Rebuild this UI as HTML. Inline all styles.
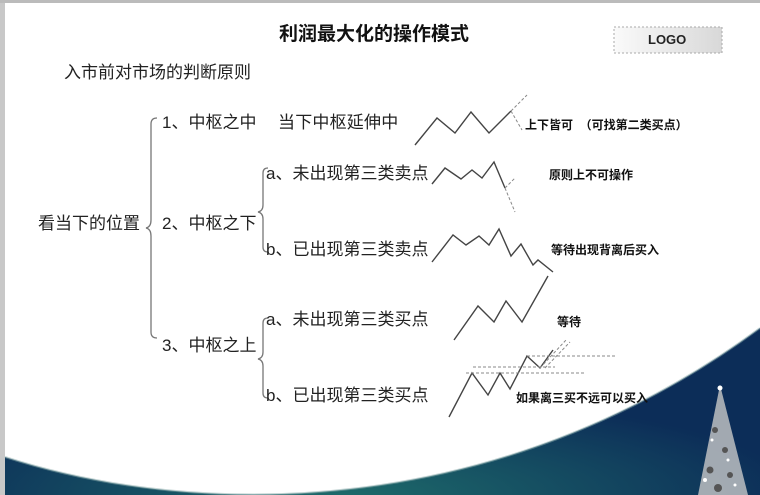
<!DOCTYPE html>
<html><head><meta charset="utf-8"><style>
body{margin:0;width:760px;height:495px;overflow:hidden;background:#fff;font-family:"Liberation Sans","Noto Sans CJK SC",sans-serif;color:#222;position:relative}
.t{position:absolute;white-space:nowrap;font-size:17px;line-height:1}
.b{font-weight:bold;font-size:12px;color:#111}
</style></head><body>
<svg width="760" height="495" style="position:absolute;left:0;top:0">
<defs>
<radialGradient id="g" cx="0.45" cy="1" r="0.6"><stop offset="0" stop-color="#1d6a6a"/><stop offset="1" stop-color="#0c2d58"/></radialGradient>
<linearGradient id="lg" x1="0" x2="1"><stop offset="0" stop-color="#fafafa"/><stop offset="1" stop-color="#d8d8d8"/></linearGradient>
</defs>
<rect x="0" y="0" width="5" height="495" fill="#c8c8c8"/>
<rect x="0" y="0" width="760" height="3" fill="#bbb"/>
<path d="M5,457 C200,520 500,520 760,328 L760,495 L5,495 Z" fill="url(#g)"/>
<path d="M5,457 C200,520 500,520 760,328" fill="none" stroke="#8aa" stroke-width="2" opacity=".5"/>
<g fill="#c8c8c8" opacity=".8">
<polygon points="720,385 698,495 748,495"/>
</g>
<g fill="#fff"><circle cx="720" cy="388" r="2.5"/><circle cx="712" cy="440" r="1.5"/><circle cx="728" cy="460" r="1.5"/><circle cx="705" cy="480" r="2"/><circle cx="735" cy="485" r="1.5"/></g>
<g fill="#555"><circle cx="715" cy="430" r="3"/><circle cx="725" cy="450" r="3"/><circle cx="710" cy="470" r="3.5"/><circle cx="730" cy="475" r="3"/><circle cx="718" cy="488" r="4"/></g>
<rect x="614" y="27" width="108" height="26" fill="url(#lg)" stroke="#aaa" stroke-dasharray="2,2"/>
<g fill="none" stroke="#777" stroke-width="1.3">
<path d="M157,118 Q151,118 151,124 L151,220 Q151,227 146,228 Q151,229 151,236 L151,332 Q151,338 157,338"/>
<path d="M268,168 Q263,168 263,173 L263,205 Q263,211 258,212 Q263,213 263,219 L263,247 Q263,252 268,252"/>
<path d="M268,318 Q263,318 263,323 L263,352 Q263,358 258,359 Q263,360 263,366 L263,393 Q263,398 268,398"/>
</g>
<g fill="none" stroke="#444" stroke-width="1.4">
<polyline points="415,145 437,118 455,133 471,112 489,133 511,111"/>
<polyline points="432,184 445,168 461,179 472,170 482,178 494,162 505,188"/>
<polyline points="432,262 453,235 466,245 479,236 489,245 499,229 511,256 521,244 533,265 538,260 553,272"/>
<polyline points="454,340 478,306 494,322 506,301 522,322 548,276"/>
<polyline points="449,417 472,373 488,395 500,373 510,389 527,356 540,368 553,350"/>
</g>
<g fill="none" stroke="#888" stroke-width="1" stroke-dasharray="3,2">
<path d="M511,111 L527,95 M511,111 L522,130"/>
<path d="M505,188 L515,178 M505,188 L515,212"/>
<path d="M527,356 L617,356 M473,367 L555,367 M466,373 L585,373 M540,368 L566,340 M545,368 L570,342"/>
</g>
</svg>
<div class="t" style="left:279px;top:25px;font-size:19px;font-weight:bold;color:#111">利润最大化的操作模式</div>
<div class="t" style="left:648px;top:33px;font-size:13px;font-weight:bold;color:#222">LOGO</div>
<div class="t" style="left:64px;top:64px;font-size:17px">入市前对市场的判断原则</div>
<div class="t" style="left:38px;top:215px">看当下的位置</div>
<div class="t" style="left:162px;top:114px">1、中枢之中</div>
<div class="t" style="left:278px;top:114px;letter-spacing:0.2px">当下中枢延伸中</div>
<div class="t" style="left:162px;top:215px">2、中枢之下</div>
<div class="t" style="left:162px;top:337px">3、中枢之上</div>
<div class="t" style="left:266px;top:165px">a、未出现第三类卖点</div>
<div class="t" style="left:266px;top:241px">b、已出现第三类卖点</div>
<div class="t" style="left:266px;top:311px">a、未出现第三类买点</div>
<div class="t" style="left:266px;top:387px">b、已出现第三类买点</div>
<div class="t b" style="left:525px;top:119px">上下皆可&nbsp;&nbsp;（可找第二类买点）</div>
<div class="t b" style="left:549px;top:169px">原则上不可操作</div>
<div class="t b" style="left:551px;top:244px">等待出现背离后买入</div>
<div class="t b" style="left:557px;top:316px">等待</div>
<div class="t b" style="left:516px;top:392px">如果离三买不远可以买入</div>
</body></html>
